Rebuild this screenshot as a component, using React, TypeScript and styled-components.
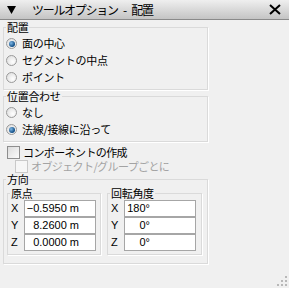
import React from 'react';
import styled, { createGlobalStyle } from 'styled-components';

const GlobalStyle = createGlobalStyle`
  html, body { margin: 0; padding: 0; background: #f0f0f0; }
  body { font-family: "Noto Sans CJK JP", "Noto Sans", sans-serif; color: #000; }
`;

const Panel = styled.div`
  width: 289px;
  height: 288px;
  background: #f0f0f0;
  position: relative;
  overflow: hidden;
  display: flex;
  flex-direction: column;
`;

const TitleBar = styled.div`
  height: 19px;
  border-bottom: 1px solid #8a8a8a;
  background: linear-gradient(#efefef, #c4c4c4);
  display: flex;
  align-items: center;
  padding: 0 8px 0 7px;
`;

const TitleText = styled.span`
  margin-left: 16px;
  font-size: 12px;
  letter-spacing: -1.3px;
  word-spacing: 4px;
  line-height: 19px;
  flex: 1;
`;

const Content = styled.div`
  padding: 1px 0 0 3px;
  display: flex;
  flex-direction: column;
`;

const Group = styled.fieldset<{ $pl?: number }>`
  margin: 0;
  width: 205px;
  box-sizing: border-box;
  min-inline-size: 0;
  padding: 0 0 3px ${p => p.$pl ?? 2}px;
  border: 1px solid #dadada;
  box-shadow: 1px 1px 0 #fff;
`;

const Legend = styled.legend<{ $lh?: number; $shift?: number }>`
  padding: 0 1px;
  margin-left: ${p => p.$shift ?? 0}px;
  font-size: 11px;
  line-height: ${p => p.$lh ?? 13}px;
  letter-spacing: -0.3px;
`;

const Spacer = styled.div<{ $h: number }>`
  height: ${p => p.$h}px;
`;

const OptionRow = styled.div`
  height: 17px;
  display: flex;
  align-items: center;
  gap: 5px;
  font-size: 11px;
  line-height: 17px;
  letter-spacing: -0.3px;
`;

const Radio = styled.span<{ $on?: boolean }>`
  width: 11px;
  height: 11px;
  border-radius: 50%;
  box-sizing: border-box;
  border: 1px solid #9a9a9a;
  background: radial-gradient(circle at 65% 65%, #ffffff, #d9d9d9);
  display: flex;
  align-items: center;
  justify-content: center;
  &::after {
    content: '';
    display: ${p => (p.$on ? 'block' : 'none')};
    width: 6px;
    height: 6px;
    border-radius: 50%;
    background: radial-gradient(circle at 35% 35%, #7fb8e6, #0d4a82 70%);
  }
`;

const CheckRow = styled.div<{ $indent: number; $disabled?: boolean }>`
  height: 14px;
  display: flex;
  align-items: center;
  gap: 3px;
  margin-left: ${p => p.$indent}px;
  font-size: 11px;
  line-height: 14px;
  letter-spacing: -0.6px;
  color: ${p => (p.$disabled ? '#a3a3a3' : '#000')};
`;

const Check = styled.span<{ $disabled?: boolean }>`
  width: 13px;
  height: 13px;
  flex: none;
  box-sizing: border-box;
  border: 1px solid ${p => (p.$disabled ? '#c9c9c9' : '#8e8e8e')};
  background: ${p => (p.$disabled ? '#f6f6f6' : 'linear-gradient(135deg, #dcdcdc, #fbfbfb)')};
`;

const OrientRow = styled.div`
  display: flex;
  gap: 6px;
  padding: 1px 0 5px 3px;
`;

const Inner = styled.fieldset<{ $w: number }>`
  margin: 0;
  width: ${p => p.$w}px;
  box-sizing: border-box;
  min-inline-size: 0;
  padding: 0 0 3px 2px;
  border: 1px solid #dadada;
  box-shadow: 1px 1px 0 #fff;
`;

const CoordGrid = styled.div`
  display: grid;
  grid-template-columns: 14px 72px;
  grid-auto-rows: 17px;
`;

const AxisLabel = styled.span`
  font-family: "Liberation Sans", Arial, sans-serif;
  font-size: 11px;
  line-height: 17px;
  padding-left: 1px;
`;

const ValueBox = styled.div<{ $pad: number }>`
  box-sizing: border-box;
  height: 17px;
  border: 1px solid #a6a6a6;
  background: #fff;
  font-family: "Liberation Sans", Arial, sans-serif;
  font-size: 11px;
  line-height: 15px;
  text-align: right;
  padding-right: ${p => p.$pad}px;
  white-space: nowrap;
`;

const Grip = styled.svg`
  position: absolute;
  right: 2px;
  bottom: 2px;
`;

const origin = [
  { axis: 'X', value: '\u22120.5950 m' },
  { axis: 'Y', value: '8.2600 m' },
  { axis: 'Z', value: '0.0000 m' },
];

const rotation = [
  { axis: 'X', value: '180°' },
  { axis: 'Y', value: '0°' },
  { axis: 'Z', value: '0°' },
];

export default function App() {
  return (
    <Panel>
      <GlobalStyle />
      <TitleBar>
        <svg width="9" height="8" viewBox="0 0 9 8">
          <path d="M0 0 H9 L4.5 8 Z" fill="#000" />
        </svg>
        <TitleText>ツールオプション - 配置</TitleText>
        <svg width="12" height="11" viewBox="0 0 12 11">
          <path d="M1 1 L11 10 M11 1 L1 10" stroke="#000" strokeWidth="2" />
        </svg>
      </TitleBar>
      <Content>
        <Group>
          <Legend>配置</Legend>
          <Spacer $h={1} />
          <OptionRow><Radio $on />面の中心</OptionRow>
          <OptionRow><Radio />セグメントの中点</OptionRow>
          <OptionRow><Radio />ポイント</OptionRow>
        </Group>
        <Group>
          <Legend>位置合わせ</Legend>
          <Spacer $h={1} />
          <OptionRow><Radio />なし</OptionRow>
          <OptionRow><Radio $on />法線/接線に沿って</OptionRow>
        </Group>
        <Spacer $h={3} />
        <CheckRow $indent={4}><Check />コンポーネントの作成</CheckRow>
        <CheckRow $indent={12} $disabled><Check $disabled />オブジェクト/グループごとに</CheckRow>
        <Group $pl={0}>
          <Legend $shift={2}>方向</Legend>
          <OrientRow>
            <Inner $w={94}>
              <Legend $lh={13}>原点</Legend>
              <CoordGrid>
                {origin.map(r => (
                  <React.Fragment key={r.axis}>
                    <AxisLabel>{r.axis}</AxisLabel>
                    <ValueBox $pad={16}>{r.value}</ValueBox>
                  </React.Fragment>
                ))}
              </CoordGrid>
            </Inner>
            <Inner $w={95}>
              <Legend $lh={13}>回転角度</Legend>
              <CoordGrid>
                {rotation.map(r => (
                  <React.Fragment key={r.axis}>
                    <AxisLabel>{r.axis}</AxisLabel>
                    <ValueBox $pad={45}>{r.value}</ValueBox>
                  </React.Fragment>
                ))}
              </CoordGrid>
            </Inner>
          </OrientRow>
        </Group>
      </Content>
      <Grip width="11" height="11" viewBox="0 0 11 11">
        {[[9, 1], [9, 5], [5, 5], [9, 9], [5, 9], [1, 9]].map(([x, y]) => (
          <rect key={`${x}-${y}`} x={x} y={y} width="2" height="2" fill="#b8b8b8" />
        ))}
      </Grip>
    </Panel>
  );
}
